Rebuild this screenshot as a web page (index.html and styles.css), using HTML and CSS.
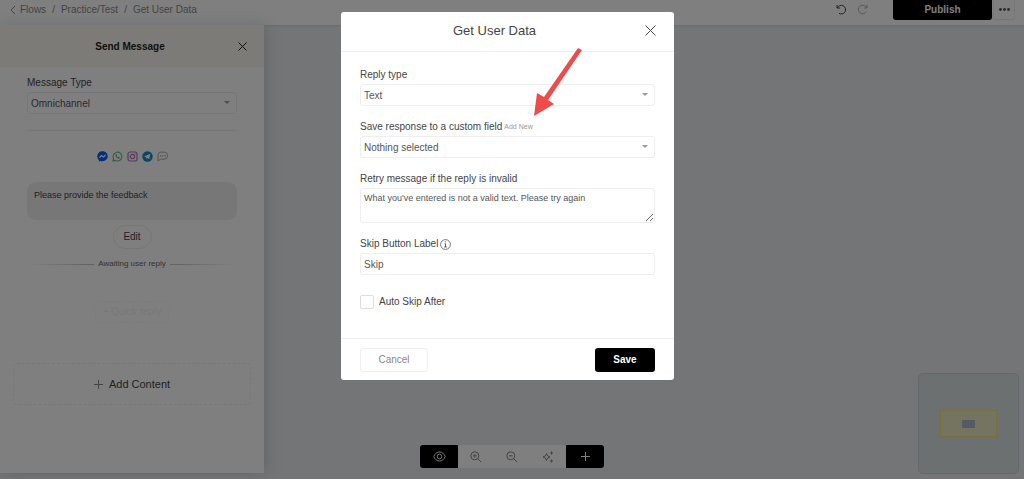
FILE: index.html
```html
<!DOCTYPE html>
<html lang="en">
<head>
    <meta charset="UTF-8">
    <meta name="viewport" content="width=device-width, initial-scale=1.0">
    <title>Get User Data</title>
    <link rel="stylesheet" href="styles.css">
</head>
<body>
    <!-- Top bar -->
    <header class="topbar">
        <nav class="breadcrumb">
            <a href="#" class="back">
                <svg width="6" height="10" viewBox="0 0 6 10"><path d="M5 1L1 5l4 4"/></svg>
                Flows
            </a>
            <span>/</span>
            <a href="#">Practice/Test</a>
            <span>/</span>
            <a href="#">Get User Data</a>
        </nav>
        <div class="actions">
            <button class="icon-btn" aria-label="Undo">
                <svg width="11" height="11" viewBox="0 0 11 11"><path d="M1 1v3h3M1.300 4A4.300 4.300 0 1 1 3 9.300"/></svg>
            </button>
            <button class="icon-btn faded" aria-label="Redo">
                <svg width="11" height="11" viewBox="0 0 11 11"><path d="M10 1v3H7M9.700 4A4.300 4.300 0 1 0 9.300 7.800"/></svg>
            </button>
            <button class="publish">Publish</button>
            <button class="more" aria-label="More">
                <svg width="11" height="3" viewBox="0 0 11 3" fill="#555"><circle cx="1.500" cy="1.500" r="1.400"/><circle cx="5.500" cy="1.500" r="1.400"/><circle cx="9.500" cy="1.500" r="1.400"/></svg>
            </button>
        </div>
    </header>

    <!-- Flow editor -->
    <main class="editor">
        <aside class="sidebar">
            <div class="sidebar-header">
                <h2>Send Message</h2>
                <button class="icon-btn" aria-label="Close panel">
                    <svg width="9" height="9" viewBox="0 0 9 9"><path d="M.5.5l8 8M8.500.5l-8 8"/></svg>
                </button>
            </div>
            <div class="sidebar-body">
                <div class="field">
                    <label for="messageType">Message Type</label>
                    <div class="select">
                        <select id="messageType"><option>Omnichannel</option></select>
                    </div>
                </div>
                <hr>
                <div class="channels">
                    <svg width="11" height="11" viewBox="0 0 11 11"><path fill="#0a5cff" d="M5.500.3C2.500.3.3 2.400.3 5.300c0 1.600.6 2.800 1.600 3.700v1.600l1.700-.7c.6.2 1.200.3 1.900.3 3 0 5.200-2.100 5.200-4.900S8.500.3 5.500.3z"/><path fill="none" stroke="#fff" stroke-width="1.200" d="M2.500 6.700l2-2.200 2 1.500 2-2"/></svg>
                    <svg width="11" height="11" viewBox="0 0 11 11"><path fill="none" stroke="#5fc284" stroke-width="1.100" d="M1 10l.6-2.300a4.400 4.400 0 1 1 1.700 1.700z"/><path fill="#5fc284" d="M3.500 3.200l1-.3.7 1.500-.5.6c.3.600.7 1 1.300 1.300l.6-.6 1.500.8-.4 1c-2 .8-5-1.900-4.200-4.300z"/></svg>
                    <svg width="11" height="11" viewBox="0 0 11 11" fill="none" stroke="#ae72cc" stroke-width="1.200"><rect x="1" y="1" width="9" height="9" rx="2"/><circle cx="5.500" cy="5.500" r="2.100"/><path d="M7.700 2.900h.8"/></svg>
                    <svg width="11" height="11" viewBox="0 0 11 11"><circle cx="5.500" cy="5.500" r="5.200" fill="#0d8ed0"/><path fill="#fff" d="M2 5.400l6.300-2.600-1 5.500-2-1.400-1 1-.3-1.700z"/></svg>
                    <svg width="11" height="11" viewBox="0 0 11 11"><path fill="none" stroke="#aaa" stroke-width="1" d="M3.500 1.200h4a3 3 0 0 1 3 3v1a3 3 0 0 1-3 3h-4L1 10V4.200a3 3 0 0 1 2.500-3z"/><path fill="none" stroke="#999" stroke-width="1.200" d="M3 4.900h1.200M5.200 4.900h1.200M7.400 4.900h1.200"/></svg>
                </div>
                <div class="bubble">Please provide the feedback</div>
                <button class="edit">Edit</button>
                <div class="awaiting">Awaiting user reply</div>
                <button class="quick-reply">+ Quick reply</button>
                <button class="add-content">
                    <svg width="9" height="9" viewBox="0 0 9 9"><path d="M4.500 0v9M0 4.500h9"/></svg>
                    Add Content
                </button>
            </div>
        </aside>

        <!-- Canvas tools -->
        <div class="tools">
            <button class="dark" aria-label="Preview">
                <svg width="13" height="11" viewBox="0 0 13 11"><path d="M.8 5.500C2 2.500 4 1 6.500 1S11 2.500 12.200 5.500C11 8.500 9 10 6.500 10S2 8.500.8 5.500z"/><circle cx="6.500" cy="5.500" r="2.300"/></svg>
            </button>
            <button aria-label="Zoom in">
                <svg width="12" height="12" viewBox="0 0 12 12"><circle cx="4.800" cy="4.800" r="4"/><path d="M7.800 7.800l3.400 3.400M4.800 3v3.600M3 4.800h3.600"/></svg>
            </button>
            <button aria-label="Zoom out">
                <svg width="12" height="12" viewBox="0 0 12 12"><circle cx="4.800" cy="4.800" r="4"/><path d="M7.800 7.800l3.400 3.400M3 4.800h3.600"/></svg>
            </button>
            <button aria-label="Tidy up">
                <svg width="12" height="12" viewBox="0 0 12 12"><path d="M4.500 2.500l1.100 2.400L8 6 5.600 7.100 4.500 9.500 3.400 7.100 1 6l2.400-1.100zM9.500.5v3M8 2h3M9.500 8.500v3M8 10h3"/></svg>
            </button>
            <button class="dark" aria-label="Add block">
                <svg width="9" height="9" viewBox="0 0 9 9"><path d="M4.500 0v9M0 4.500h9"/></svg>
            </button>
        </div>

        <div class="minimap">
            <svg width="57" height="27" viewBox="0 0 57 27"><rect x=".5" y=".5" width="56" height="26" fill="#eae8c2" stroke="#eee07a"/><rect x="22" y="10" width="13" height="8" fill="#aab4cc"/></svg>
        </div>
    </main>

    <!-- Get User Data dialog -->
    <div class="overlay">
        <form class="modal" role="dialog" aria-labelledby="modalTitle">
            <div class="modal-header">
                <h1 id="modalTitle">Get User Data</h1>
                <button type="button" class="icon-btn" aria-label="Close">
                    <svg width="11" height="11" viewBox="0 0 11 11"><path d="M.5.5l10 10M10.500.5l-10 10"/></svg>
                </button>
            </div>
            <div class="modal-body">
                <div class="field">
                    <label for="replyType">Reply type</label>
                    <div class="select">
                        <select id="replyType"><option>Text</option></select>
                    </div>
                </div>
                <div class="field">
                    <div class="label-row">
                        <label for="customField">Save response to a custom field</label>
                        <a href="#">Add New</a>
                    </div>
                    <div class="select">
                        <select id="customField"><option>Nothing selected</option></select>
                    </div>
                </div>
                <div class="field">
                    <label for="retryMessage">Retry message if the reply is invalid</label>
                    <textarea id="retryMessage">What you've entered is not a valid text. Please try again</textarea>
                </div>
                <div class="field">
                    <div class="label-row">
                        <label for="skipLabel">Skip Button Label</label>
                        <svg width="11" height="11" viewBox="0 0 11 11" fill="none" stroke="#555"><circle cx="5.500" cy="5.500" r="4.900" stroke-width=".8"/><path d="M4.500 4.700h1V8M4.200 8h2.600M5 2.800h1" stroke-width=".9"/></svg>
                    </div>
                    <input type="text" id="skipLabel" value="Skip">
                </div>
                <div class="check">
                    <input type="checkbox" id="autoSkip">
                    <label for="autoSkip">Auto Skip After</label>
                </div>
            </div>
            <div class="modal-footer">
                <button type="button" class="cancel">Cancel</button>
                <button type="submit" class="save">Save</button>
            </div>
            <svg class="pointer" width="48" height="68" viewBox="0 0 48 68"><path fill="#ee4b4b" d="M44 0l4 2-34 50 6 4L0 68l3-23 7 4z"/></svg>
        </form>
    </div>
</body>
</html>
```
FILE: styles.css
```css
/* General Styles */
* {
    box-sizing: border-box;
}

body {
    font-family: "Liberation Sans", Arial, sans-serif;
    font-size: 10px;
    line-height: 14px;
    color: #444;
    margin: 0;
    height: 100vh;
    display: flex;
    flex-direction: column;
    overflow: hidden;
    background-color: #e8eaec;
}

button, input, select, textarea {
    font: inherit;
    color: inherit;
    margin: 0;
}

button {
    display: flex;
    align-items: center;
    justify-content: center;
    padding: 0;
    border: none;
    background: none;
    cursor: pointer;
}

a {
    color: inherit;
    text-decoration: none;
}

h1, h2 {
    margin: 0;
}

svg {
    flex: none;
}

.back svg, .icon-btn svg, .tools svg, .add-content svg {
    fill: none;
    stroke: currentColor;
}

/* Top bar */
.topbar {
    display: flex;
    justify-content: space-between;
    height: 25px;
    padding: 0 9px 0 10px;
    background-color: white;
    box-shadow: 0 1px 2px rgba(0, 0, 0, 0.1);
}

.breadcrumb {
    display: flex;
    gap: 6px;
    height: 20px;
    align-items: center;
    color: #888;
}

.back {
    display: flex;
    align-items: center;
    gap: 4px;
}

.actions {
    display: flex;
    height: 20px;
}

.actions .icon-btn {
    width: 21px;
    height: 18px;
}

.faded {
    opacity: 0.4;
}

.publish {
    width: 99px;
    margin-left: 20px;
    background-color: black;
    color: white;
    font-weight: bold;
    border-radius: 0 0 3px 3px;
}

.more {
    width: 22px;
    margin-left: 1px;
    border: 1px solid #eee;
    border-top: none;
    border-radius: 0 0 3px 3px;
}

/* Editor */
.editor {
    position: relative;
    flex: 1;
    display: flex;
    padding-bottom: 6px;
}

.sidebar {
    width: 264px;
    background-color: white;
    box-shadow: 2px 0 14px rgba(80, 110, 140, 0.25);
}

.sidebar-header {
    display: flex;
    align-items: center;
    height: 42px;
    padding: 0 17px 0 22px;
    background-color: #faf7ee;
    color: #222;
}

.sidebar-header h2 {
    flex: 1;
    padding-top: 1px;
    font-size: 10px;
    text-align: center;
}

.sidebar-body {
    display: flex;
    flex-direction: column;
    padding: 9px 13px;
}

.sidebar-body .field,
.sidebar-body hr,
.bubble,
.awaiting {
    margin-left: 14px;
    margin-right: 14px;
}

.sidebar-body hr {
    align-self: stretch;
    height: 1px;
    margin-top: 16px;
    margin-bottom: 0;
    border: none;
    background-color: #eee;
}

.channels {
    display: flex;
    justify-content: center;
    gap: 4px;
    margin-top: 20px;
}

.bubble {
    height: 38px;
    margin-top: 20px;
    padding: 6px 7px;
    border-radius: 9px;
    background-color: #eee;
    font-size: 9px;
}

.edit {
    align-self: center;
    width: 39px;
    height: 24px;
    margin-top: 5px;
    border: 1px solid #eee;
    border-radius: 12px;
}

.awaiting {
    display: flex;
    align-items: center;
    gap: 4px;
    margin-top: 8px;
    font-size: 8px;
    color: #666;
}

.awaiting::before,
.awaiting::after {
    content: "";
    flex: 1;
    height: 1px;
    background: linear-gradient(to right, transparent, #c5c2b8);
}

.awaiting::after {
    background: linear-gradient(to left, transparent, #c5c2b8);
}

.quick-reply {
    align-self: center;
    width: 74px;
    height: 22px;
    margin-top: 30px;
    border: 1px dashed #f7f7f7;
    border-radius: 3px;
    color: #f0f0f0;
}

.add-content {
    gap: 6px;
    height: 42px;
    margin-top: 40px;
    border: 1px dashed #edf0f3;
    border-radius: 4px;
    font-size: 11px;
}

.add-content svg {
    color: #888;
}

/* Canvas tools */
.tools {
    position: absolute;
    left: 50%;
    bottom: 11px;
    transform: translateX(-50%);
    display: flex;
    overflow: hidden;
    border-radius: 3px;
    background-color: white;
    color: #888;
}

.tools button {
    width: 36px;
    height: 23px;
}

.tools .dark {
    width: 38px;
    background-color: black;
    color: white;
}

.minimap {
    position: absolute;
    right: 5px;
    bottom: 5px;
    display: flex;
    align-items: center;
    justify-content: center;
    width: 101px;
    height: 101px;
    border: 1px solid #cbcfe0;
    border-radius: 5px;
    background-color: #dae0e2;
}

/* Form fields */
.field {
    display: flex;
    flex-direction: column;
    gap: 2px;
}

.label-row {
    display: flex;
    align-items: center;
    gap: 2px;
}

.label-row a {
    font-size: 7px;
    color: #999;
}

.select {
    position: relative;
}

.select::after {
    content: "";
    position: absolute;
    right: 7px;
    top: 9px;
    border: 3px solid transparent;
    border-top-color: #999;
    border-bottom: none;
}

select,
textarea,
input[type="text"] {
    display: block;
    width: 100%;
    height: 22px;
    padding: 1px 3px 0;
    border: 1px solid #eee;
    border-radius: 3px;
    background-color: white;
    color: #555;
    outline: none;
    appearance: none;
}

textarea {
    height: 35px;
    padding: 2px 3px;
    font-size: 9px;
    resize: vertical;
}

/* Dialog */
.overlay {
    position: fixed;
    inset: 0;
    display: flex;
    align-items: flex-start;
    justify-content: center;
    padding: 12px 9px 0 0;
    background-color: rgba(0, 0, 0, 0.5);
}

.modal {
    position: relative;
    width: 100%;
    max-width: 333px;
    border-radius: 3px;
    background-color: white;
}

.modal-header {
    display: flex;
    align-items: center;
    height: 40px;
    padding: 0 18px 2px 3px;
    border-bottom: 1px solid #eee;
}

.modal-header h1 {
    flex: 1;
    padding-top: 1px;
    font-size: 13px;
    font-weight: normal;
    text-align: center;
}

.modal-body {
    display: flex;
    flex-direction: column;
    gap: 14px;
    padding: 16px 19px 29px;
}

.check {
    display: flex;
    align-items: center;
    gap: 5px;
    margin-top: 6px;
}

.check input {
    width: 14px;
    height: 14px;
    border: 1px solid #ddd;
    border-radius: 2px;
    appearance: none;
}

.modal-footer {
    display: flex;
    justify-content: space-between;
    padding: 9px 19px 8px;
    border-top: 1px solid #eee;
}

.cancel {
    width: 68px;
    height: 24px;
    border: 1px solid #eee;
    border-radius: 3px;
    color: #888;
}

.save {
    width: 60px;
    height: 24px;
    border-radius: 3px;
    background-color: black;
    color: white;
    font-weight: bold;
}

/* Red arrow to the Add New link */
.pointer {
    position: absolute;
    left: 193px;
    top: 36px;
    pointer-events: none;
}
```
